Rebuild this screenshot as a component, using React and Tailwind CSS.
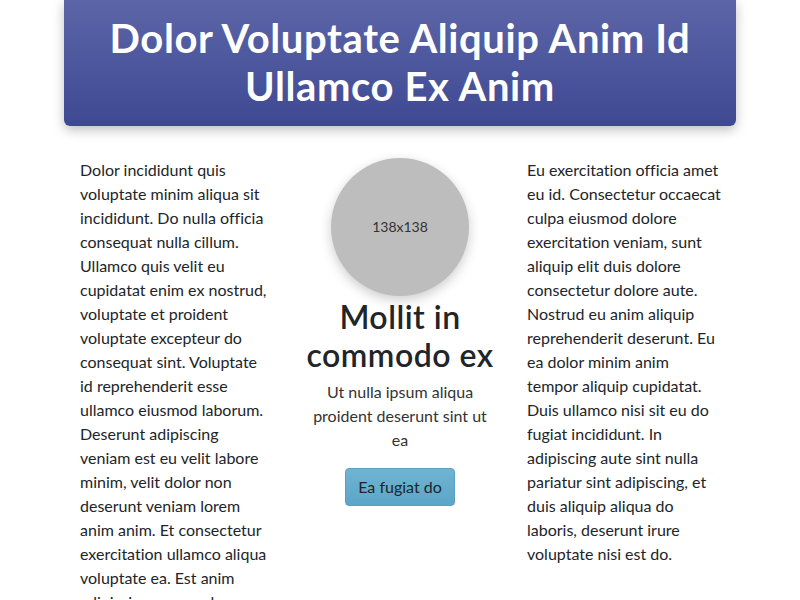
const rightLines = [
  "Eu exercitation officia amet",
  "eu id. Consectetur occaecat",
  "culpa eiusmod dolore",
  "exercitation veniam, sunt",
  "aliquip elit duis dolore",
  "consectetur dolore aute.",
  "Nostrud eu anim aliquip",
  "reprehenderit deserunt. Eu",
  "ea dolor minim anim",
  "tempor aliquip cupidatat.",
  "Duis ullamco nisi sit eu do",
  "fugiat incididunt. In",
  "adipiscing aute sint nulla",
  "pariatur sint adipiscing, et",
  "duis aliquip aliqua do",
  "laboris, deserunt irure",
  "voluptate nisi est do.",
];

export default function App() {
  const font = { fontFamily: 'Lato, "Noto Sans", sans-serif' };
  return (
    <div className="min-h-[600px] bg-white [font-variant-ligatures:none]" style={font}>
      <div className="mx-auto w-[672px]">
        <header className="rounded-b-md bg-gradient-to-b from-[#5c65a7] to-[#3f4993] px-4 pt-[14px] pb-4 text-center text-white shadow-[0_4px_12px_rgba(0,0,0,0.25)]">
          <h1 className="text-[40px] font-bold leading-[48px] tracking-[0.6px]">
            Dolor Voluptate Aliquip Anim Id Ullamco Ex Anim
          </h1>
        </header>
        <div className="mt-8 grid grid-cols-3">
          <div className="px-4 text-base leading-6 text-[#212529]">
            Dolor incididunt quis voluptate minim aliqua sit incididunt. Do nulla officia consequat nulla cillum. Ullamco quis velit eu cupidatat enim ex nostrud, voluptate et proident voluptate excepteur do consequat sint. Voluptate id reprehenderit esse ullamco eiusmod laborum. Deserunt adipiscing veniam est eu velit labore minim, velit dolor non deserunt veniam lorem anim anim. Et consectetur exercitation ullamco aliqua voluptate ea. Est anim adipiscing commodo aliqua.
          </div>
          <div className="flex flex-col items-center px-4 text-center text-[#212529]">
            <div className="flex h-[138px] w-[138px] items-center justify-center rounded-full bg-[#bdbdbd] text-sm text-[#333] shadow-[0_4px_12px_rgba(0,0,0,0.2)]">
              138x138
            </div>
            <h2 className="mt-[2px] text-[32px] font-semibold leading-[38px] tracking-[0.5px]">Mollit in commodo ex</h2>
            <p className="mt-[6px] text-base leading-6 text-[#333]">
              Ut nulla ipsum aliqua proident deserunt sint ut ea
            </p>
            <button className="mt-4 rounded border border-[#5a9fc0] bg-gradient-to-b from-[#70b4d1] to-[#5aa6c8] px-3 py-[6px] text-base leading-6 text-[#212529]">
              Ea fugiat do
            </button>
          </div>
          <p className="pl-[15px] pr-2 text-base leading-6 text-[#212529]">
            {rightLines.map((l, i) => (
              <span key={i} className="block whitespace-nowrap">{l}</span>
            ))}
          </p>
        </div>
      </div>
    </div>
  );
}
